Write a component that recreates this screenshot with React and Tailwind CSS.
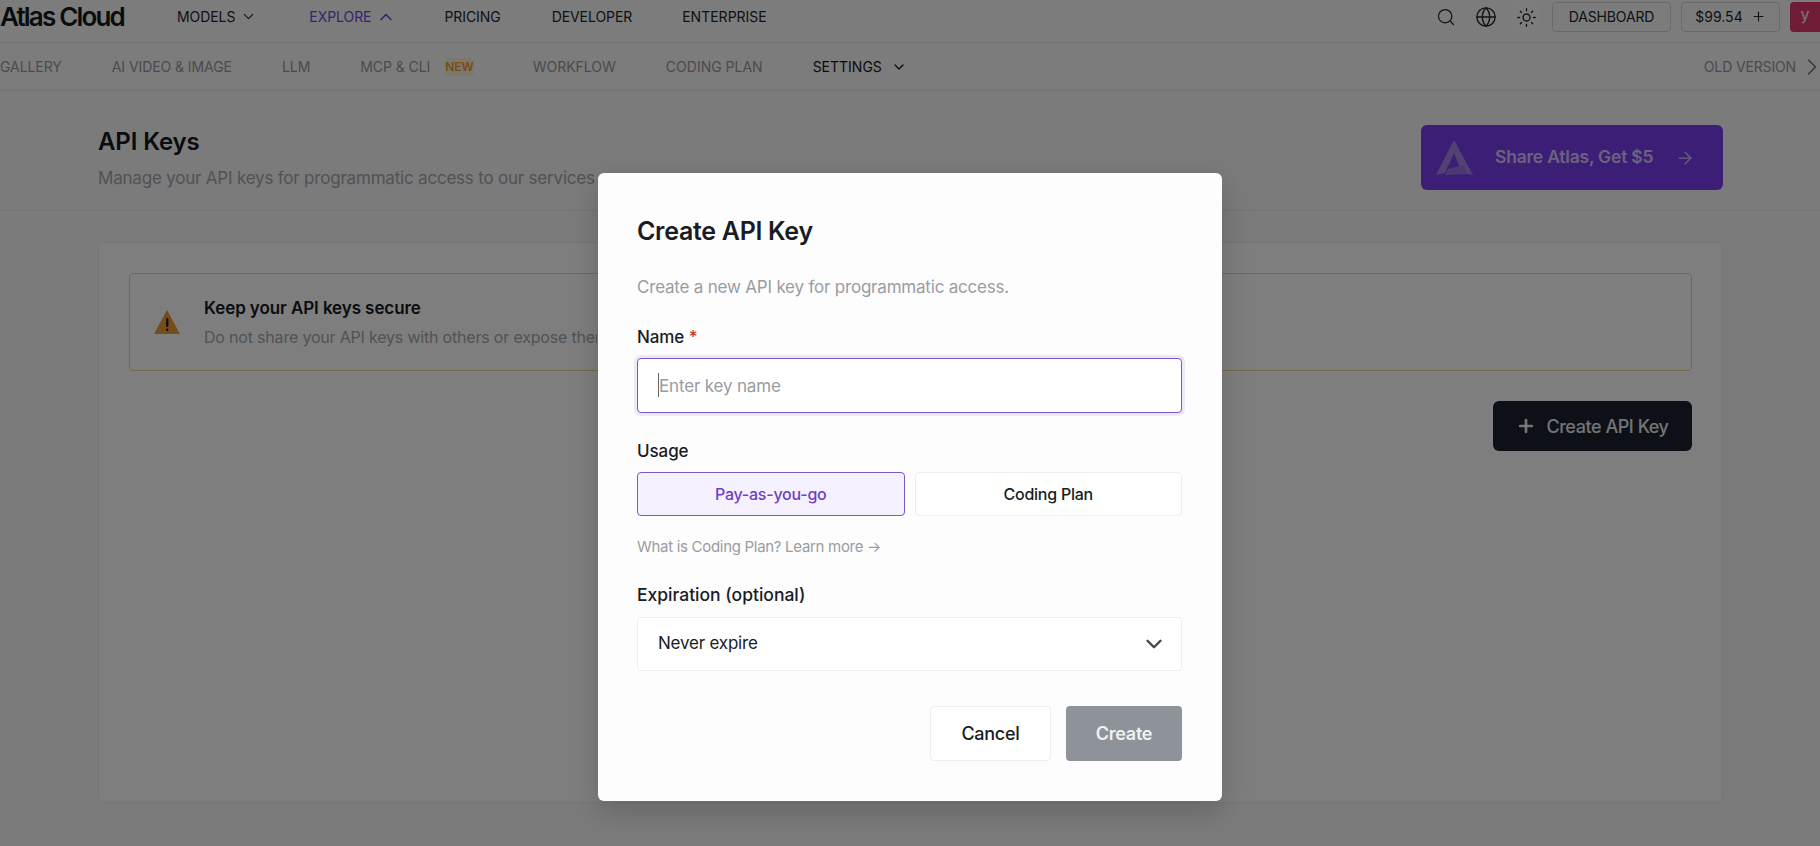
import React from "react";
import { ChevronDown, ChevronUp, ChevronRight, Search, Globe, Sun, Plus, ArrowRight } from "lucide-react";

const font = "font-['Inter','Noto_Sans',sans-serif]";

function TopNav() {
  return (
    <header className="flex h-[43px] items-start border-b border-[#e4e4e6] bg-[#f8f8f9] pt-[2px]">
      <div className="flex h-[29px] w-[177px] shrink-0 items-center text-[26px] font-semibold leading-none tracking-[-0.07em] text-[#16181d]">Atlas Cloud</div>
      <nav className="flex h-[29px] items-center text-[14px] tracking-[-0.005em] text-[#22252b]">
        <span className="flex items-center gap-[5px]">MODELS <ChevronDown size={17} strokeWidth={1.5} /></span>
        <span className="ml-[52px] flex items-center gap-[5px] text-[#6d4bdc]">EXPLORE <ChevronUp size={20} strokeWidth={2} /></span>
        <span className="ml-[48px]">PRICING</span>
        <span className="ml-[51px]">DEVELOPER</span>
        <span className="ml-[50px] tracking-normal">ENTERPRISE</span>
      </nav>
      <div className="ml-auto flex items-center">
        <Search size={20} strokeWidth={1.5} className="mr-[19px] text-[#22252b]" />
        <Globe size={22} strokeWidth={1.5} className="mr-[15px] text-[#22252b]" />
        <span className="mr-[12px] flex h-[28px] w-[28px] items-center justify-center rounded bg-[#fbfbfb] text-[#22252b]"><Sun size={21} strokeWidth={1.5} /></span>
        <button className="flex h-[30px] w-[119px] items-center justify-center rounded-[4px] border border-[#d4d4d6] pb-[1px] text-[14px] tracking-[-0.01em] text-[#22252b]">DASHBOARD</button>
        <button className="ml-[10px] flex h-[30px] w-[99px] items-center justify-center gap-[8px] rounded-[4px] border border-[#d4d4d6] pb-[1px] text-[14px] text-[#22252b]">$99.54 <Plus size={15} strokeWidth={1.75} /></button>
        <div className="ml-[10px] flex h-[30px] w-[30px] items-start justify-center rounded-l-[4px] bg-[#e2386f] text-[16px] leading-[24px] text-white/90">y</div>
      </div>
    </header>
  );
}

function SubNav() {
  return (
    <div className="flex h-[48px] items-center border-b border-[#e4e4e6] bg-[#f8f8f9] text-[14px] tracking-[-0.005em] text-[#95979c]">
      <div className="flex items-center gap-[50px]">
        <span>GALLERY</span>
        <span>AI VIDEO &amp; IMAGE</span>
        <span>LLM</span>
        <span className="flex items-center gap-[15px] pr-[9px]">MCP &amp; CLI <span className="rounded bg-[#fbf0dc] text-[12px] font-semibold text-[#ee9a2b]">NEW</span></span>
        <span className="tracking-normal">WORKFLOW</span>
        <span className="tracking-normal">CODING PLAN</span>
        <span className="flex items-center gap-[9px] tracking-normal text-[#14161b]">SETTINGS <ChevronDown size={16} strokeWidth={2} /></span>
      </div>
      <div className="ml-auto flex items-center gap-[2px]">
        <span className="tracking-[-0.01em]">OLD VERSION</span>
        <ChevronRight size={28} strokeWidth={1.25} className="-mr-[6px] text-[#6b6d72]" />
      </div>
    </div>
  );
}

function PageBody() {
  return (
    <main>
      <section className="flex h-[120px] items-start justify-between border-b border-[#e9e9eb] pl-[98px] pr-[97px]">
        <div className="pt-[35px]">
          <h1 className="text-[24px] font-semibold leading-[32px] tracking-[-0.005em] text-[#141821]">API Keys</h1>
          <p className="mt-[6px] w-[499px] overflow-hidden whitespace-nowrap text-[17px] leading-[28px] tracking-[-0.012em] text-[#a3a5aa]">Manage your API keys for programmatic access to our services</p>
        </div>
        <button className="mt-[34px] flex h-[65px] w-[302px] items-center rounded-[6px] bg-[#7b3cec] pl-[15px] text-white/90">
          <svg width="37" height="36" viewBox="0 0 37 36" fill="none" aria-hidden="true">
            <path d="M18 0 L37 35 L26 33 L18 13 L9 33 L0 35 Z" fill="#a284e6" />
            <path d="M12 29 L27 25 L31 34 L9 35 Z" fill="#9474e2" />
          </svg>
          <span className="ml-[22px] text-[17.5px] font-semibold tracking-[-0.012em] text-[#d6c6fa]">Share Atlas, Get $5</span>
          <ArrowRight size={20} strokeWidth={1.5} className="ml-[22px] text-[#d6c6fa]" />
        </button>
      </section>
      <section className="ml-[98px] mr-[97px] mt-[31px] h-[561px] rounded-[6px] border border-[#ededf0] bg-[#fdfdfd] px-[30px] pt-[30px]">
        <div className="flex h-[98px] items-center rounded-[4px] border border-[#f3cd8a] pl-[24px]">
          <svg width="26" height="24" viewBox="0 0 26 24" aria-hidden="true">
            <path d="M13 0 L26 24 L0 24 Z" fill="#ea9a3a" />
            <rect x="12" y="8" width="2.4" height="9" rx="1" fill="#33230f" />
            <rect x="12" y="18.6" width="2.4" height="2.6" rx="1" fill="#33230f" />
          </svg>
          <div className="ml-[24px]">
            <div className="text-[17px] font-semibold leading-[24px] tracking-[-0.005em] text-[#141821]">Keep your API keys secure</div>
            <div className="mt-[5px] w-[393px] overflow-hidden whitespace-nowrap text-[16px] leading-[24px] tracking-[-0.012em] text-[#a3a5aa]">Do not share your API keys with others or expose them in client-side code.</div>
          </div>
        </div>
        <div className="mt-[30px] flex justify-end">
          <button className="flex h-[50px] w-[199px] items-center justify-center gap-[10px] rounded-[6px] bg-[#1a202c] text-[18px] font-medium tracking-[-0.025em] text-white/90">
            <Plus size={20} strokeWidth={3.25} /> Create API Key
          </button>
        </div>
      </section>
    </main>
  );
}

function Dialog() {
  return (
    <div className="absolute inset-0 flex justify-center bg-black/50 pt-[173px]">
      <div className="h-[628px] w-[624px] rounded-[6px] bg-[#fdfdfe] pl-[39px] pr-[40px] pt-[40px] shadow-[0_10px_30px_rgba(0,0,0,0.18)]">
        <h2 className="text-[25px] font-semibold leading-[36px] tracking-[-0.012em] text-[#191c23]">Create API Key</h2>
        <p className="mt-[24px] text-[17px] leading-[28px] tracking-[-0.012em] text-[#9a9ca1]">Create a new API key for programmatic access.</p>
        <label className="mt-[24px] block text-[17px] font-medium leading-[24px] tracking-[-0.005em] text-[#191c23]">Name <span className="text-[#c9362b]">*</span></label>
        <div className="relative mt-[9px]">
          <input readOnly placeholder="Enter key name" className="h-[55px] w-full rounded-[4px] border border-[#7b58c4] bg-white pl-[21px] text-[17px] tracking-[-0.01em] shadow-[0_0_0_3px_rgba(124,88,220,0.12)] outline-none placeholder:text-[#9a9ca1]" />
          <span className="absolute left-[21px] top-[15px] h-[24px] w-px bg-[#666]" />
        </div>
        <div className="mt-[26px] text-[17px] font-medium leading-[24px] tracking-[-0.005em] text-[#191c23]">Usage</div>
        <div className="mt-[9px] grid grid-cols-2 gap-[10px]">
          <button className="h-[44px] rounded-[4px] border border-[#7b58c4] bg-[#f6f1fe] text-[16px] font-medium tracking-[-0.015em] text-[#6d3fc4]">Pay-as-you-go</button>
          <button className="h-[44px] rounded-[4px] border border-[#eeeef0] bg-white text-[16px] font-medium tracking-[-0.015em] text-[#191c23]">Coding Plan</button>
        </div>
        <div className="mt-[21px] text-[15px] leading-[20px] tracking-[-0.02em] text-[#9a9ca1]">What is Coding Plan? Learn more →</div>
        <div className="mt-[26px] text-[17.5px] font-medium leading-[24px] text-[#191c23]">Expiration (optional)</div>
        <div className="mt-[10px] flex h-[54px] items-center justify-between rounded-[4px] border border-[#eeeef0] bg-white pl-[20px] pr-[14px] text-[17px] tracking-[-0.012em] text-[#191c23]">
          Never expire
          <ChevronDown size={26} strokeWidth={2.25} className="text-[#44464c]" />
        </div>
        <div className="mt-[35px] flex justify-end gap-[15px]">
          <button className="h-[55px] w-[121px] rounded-[4px] border border-[#eeeef0] bg-white text-[18px] font-medium tracking-[-0.015em] text-[#191c23]">Cancel</button>
          <button className="h-[55px] w-[116px] rounded-[4px] bg-[#8d9398] text-[18px] font-semibold tracking-[-0.015em] text-[#f0f1f2]">Create</button>
        </div>
      </div>
    </div>
  );
}

export default function App() {
  return (
    <div className={`relative h-[846px] w-[1820px] overflow-hidden bg-[#f6f6f7] ${font}`}>
      <TopNav />
      <SubNav />
      <PageBody />
      <Dialog />
    </div>
  );
}
